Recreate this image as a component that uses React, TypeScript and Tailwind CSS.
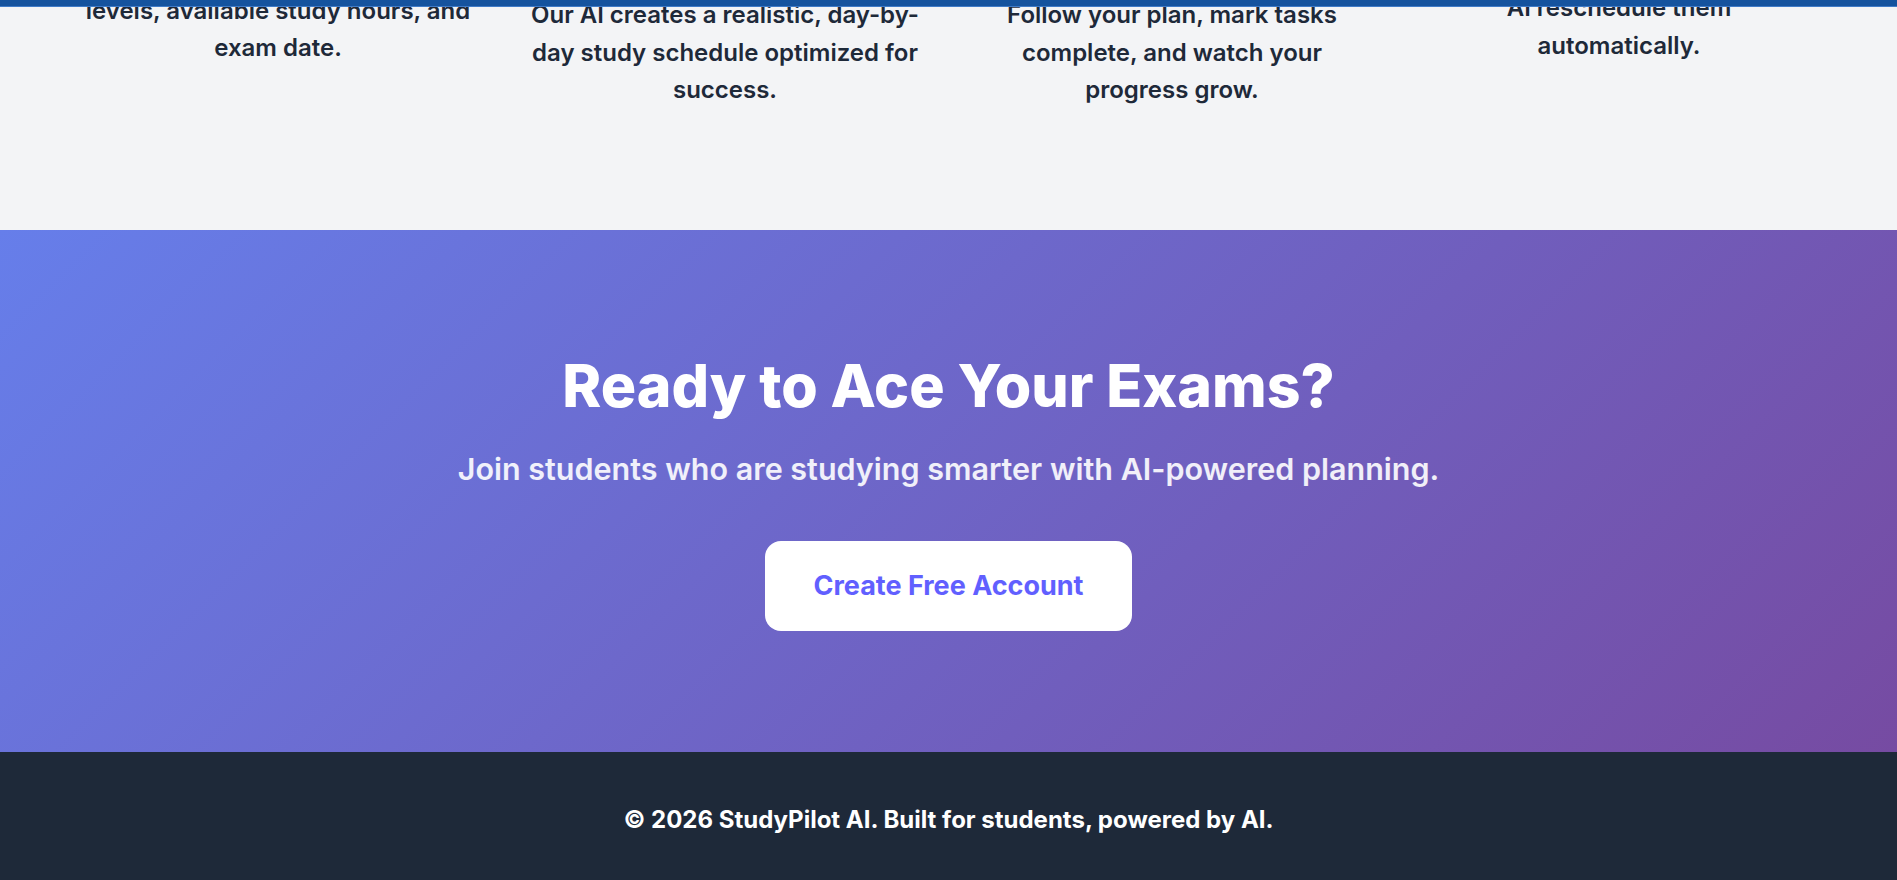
import React from 'react'

const steps = [
  {
    text: (
      <>
        Tell us your subjects, confidence
        <br />
        levels, available study hours, and
        <br />
        exam date.
      </>
    ),
    shift: '-mt-[42px]',
  },
  {
    text: (
      <>
        Our AI creates a realistic, day-by-
        <br />
        day study schedule optimized for
        <br />
        success.
      </>
    ),
    shift: 'mt-0',
  },
  {
    text: (
      <>
        Follow your plan, mark tasks
        <br />
        complete, and watch your
        <br />
        progress grow.
      </>
    ),
    shift: 'mt-0',
  },
  {
    text: (
      <>
        AI reschedule them
        <br />
        automatically.
      </>
    ),
    shift: '-mt-[7px]',
  },
]

export default function App() {
  return (
    <div className="relative min-h-screen bg-gray-100 font-['Inter',sans-serif]">
      {/* top bar */}
      <div className="fixed top-0 left-0 right-0 z-10 h-[7px] bg-[#15539e] border-b border-[#3f7bc8]" />

      {/* How it works (scrolled) */}
      <section className="h-[230px] overflow-hidden bg-gray-100">
        <div className="mx-auto grid max-w-[1756px] grid-cols-4 items-start gap-8 -mt-[4px]">
          {steps.map((s, i) => (
            <p
              key={i}
              className={`${s.shift} text-center text-2xl font-semibold leading-[37.5px] text-gray-800`}
            >
              {s.text}
            </p>
          ))}
        </div>
      </section>

      {/* CTA */}
      <section className="flex h-[522px] flex-col items-center justify-center bg-[linear-gradient(135deg,#667eea_0%,#764ba2_100%)] text-center text-white">
        <h2 className="text-[59px] font-extrabold leading-[1.2]">Ready to Ace Your Exams?</h2>
        <p className="mt-6 text-[30.5px] font-semibold leading-[45px] text-white/90">
          Join students who are studying smarter with AI-powered planning.
        </p>
        <button className="mt-[50px] rounded-2xl bg-white px-12 py-[29px] text-[27px] font-bold leading-8 text-indigo-500">
          Create Free Account
        </button>
      </section>

      {/* footer */}
      <footer className="flex h-[128px] items-center justify-center bg-gray-800 pt-[7px]">
        <p className="text-2xl font-bold text-white">© 2026 StudyPilot AI. Built for students, powered by AI.</p>
      </footer>
    </div>
  )
}
